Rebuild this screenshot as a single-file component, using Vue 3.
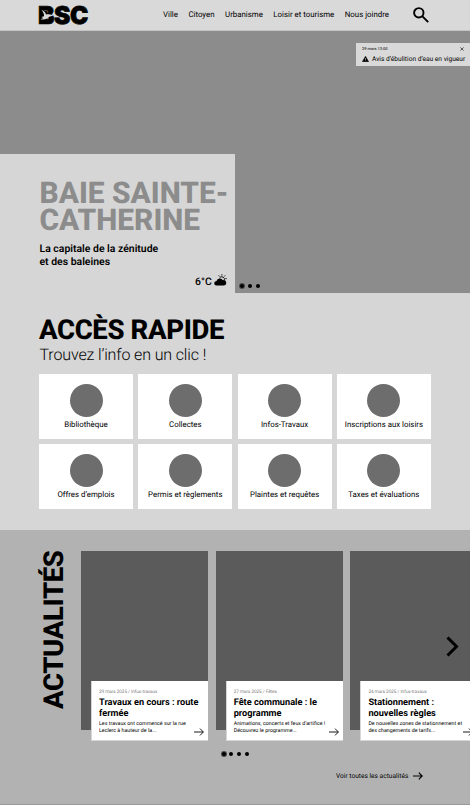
<script setup>
const nav = ['Ville', 'Citoyen', 'Urbanisme', 'Loisir et tourisme', 'Nous joindre']
const services = [
  'Bibliothèque', 'Collectes', 'Infos-Travaux', 'Inscriptions aux loisirs',
  'Offres d’emplois', 'Permis et règlements', 'Plaintes et requêtes', 'Taxes et évaluations',
]
const news = [
  { meta: '29 mars 2025 / Infos-travaux', title: ['Travaux en cours : route', 'fermée'], text: ['Les travaux ont commencé sur la rue', 'Leclerc à hauteur de la...'] },
  { meta: '27 mars 2025 / Fêtes', title: ['Fête communale : le', 'programme'], text: ['Animations, concerts et feux d’artifice !', 'Découvrez le programme...'] },
  { meta: '24 mars 2025 / Infos-travaux', title: ['Stationnement :', 'nouvelles règles'], text: ['De nouvelles zones de stationnement et', 'des changements de tarifs...'] },
]
</script>

<template>
  <div class="page">
    <header class="header">
      <div class="logo">
        <span>BSC</span>
        <svg class="bird" viewBox="0 0 16 20"><path class="fill" d="M4.5 4.5 H9.5 V15 H4.5Z" /><path d="M3.6 4 C6 4.6 7.6 6.4 8 8.6 C10 7.9 12 8.6 15.6 9.4 L11.2 10.8 C9.6 12.9 6.5 14 2.6 13.2 L5.3 11.9 L3.4 10.9 L6 10.2 C6.2 8 5.2 5.8 3.6 4Z" /></svg>
      </div>
      <nav class="nav"><a v-for="n in nav" :key="n">{{ n }}</a></nav>
      <svg class="search" viewBox="0 0 16 16"><circle cx="5.8" cy="5.8" r="4.7" /><path d="M9.2 9.2 L15.2 15.2" /></svg>
    </header>

    <section class="hero">
      <aside class="alert">
        <div class="alert-top"><span>29 mars 13:00</span><svg viewBox="0 0 4 4"><path d="M.4 .4 L3.6 3.6 M3.6 .4 L.4 3.6" /></svg></div>
        <div class="alert-text">
          <svg viewBox="0 0 8 7"><path d="M4 .3 L7.6 6.6 H.4Z" /><path class="mark" d="M4 2.4 V4.5 M4 5.1 V5.8" /></svg>
          <span>Avis d’ébulition d’eau en vigueur</span>
        </div>
      </aside>
      <div class="intro">
        <h1>BAIE SAINTE-<br>CATHERINE</h1>
        <p>La capitale de la zénitude<br>et des baleines</p>
        <div class="weather">
          <span>6°C</span>
          <svg viewBox="0 0 13 12">
            <path class="ray" d="M7.9 .2 V1.6 M4.7 1.4 L5.6 2.5 M11.2 1.4 L10.3 2.5 M12.7 4.6 H11.3 M11.3 7.8 L10.7 7" />
            <path class="sun" d="M5.5 4 A2.7 2.7 0 0 1 10.3 6.4" />
            <path d="M2.6 11.6 A2.3 2.3 0 0 1 2.5 6.9 A3.5 3.5 0 0 1 8.9 6.2 A2.7 2.7 0 0 1 10 11.6Z" />
          </svg>
        </div>
      </div>
      <div class="dots hero-dots"><i class="on" /><i /><i /></div>
    </section>

    <section class="quick">
      <h2>ACCÈS RAPIDE</h2>
      <p class="sub">Trouvez l’info en un clic !</p>
      <div class="grid">
        <a v-for="s in services" :key="s" class="tile"><i /><span>{{ s }}</span></a>
      </div>
    </section>

    <section class="news">
      <div class="news-row">
        <h2 class="vertical">ACTUALITÉS</h2>
        <div class="track">
          <article v-for="n in news" :key="n.meta" class="card">
            <div class="photo" />
            <div class="body">
              <div class="meta">{{ n.meta }}</div>
              <h3>{{ n.title[0] }}<br>{{ n.title[1] }}</h3>
              <p>{{ n.text[0] }}<br>{{ n.text[1] }}</p>
              <svg class="arrow" viewBox="0 0 10 8"><path d="M0 4 H9.2 M6 .6 L9.4 4 L6 7.4" /></svg>
            </div>
          </article>
        </div>
        <svg class="next" viewBox="0 0 13 21"><path d="M1.5 1.5 L10.5 10.5 L1.5 19.5" /></svg>
      </div>
      <div class="dots news-dots"><i class="on" /><i /><i /><i /></div>
      <a class="all"><span>Voir toutes les actualités</span><svg viewBox="0 0 10 8"><path d="M0 4 H9.2 M5.8 .6 L9.2 4 L5.8 7.4" /></svg></a>
    </section>
  </div>
</template>

<style>
body { margin: 0; }
</style>

<style scoped>
* { box-sizing: border-box; }
h1, h2, h3, p { margin: 0; }
svg { display: block; flex: none; }
.page { width: 470px; height: 805px; overflow: hidden; background: #d6d6d6; color: #000; font-family: Roboto, sans-serif; white-space: nowrap; text-rendering: geometricPrecision; }
.header { height: 31px; background: #d9d9d9; display: flex; align-items: center; padding-left: 39px; border-bottom: 1px solid #c4c4c4; }
.logo { position: relative; width: 51px; font: 900 24.5px/29px Inter, sans-serif; letter-spacing: -.3px; margin-left: -1px; -webkit-text-stroke: .7px #000; }
.bird { position: absolute; left: 0; top: 5px; width: 16px; height: 20px; fill: #d9d9d9; }
.bird .fill { fill: #000; }
.nav { display: flex; gap: 10.5px; margin-left: 74px; font-size: 7.87px; line-height: 10px; }
.search { width: 16px; height: 16px; margin: -1px 0 0 23.5px; fill: none; stroke: #000; stroke-width: 1.9; }

.hero { position: relative; height: 262px; background: #8c8c8c; display: flex; align-items: flex-end; }
.alert { position: absolute; right: 0; top: 12px; width: 114px; height: 23px; background: #d9d9d9; padding: 4px 6px 0 6px; }
.alert-top { display: flex; justify-content: space-between; align-items: center; font-size: 4px; line-height: 4px; }
.alert-top svg { width: 4px; height: 4px; stroke: #000; stroke-width: .6; }
.alert-text { display: flex; align-items: center; gap: 3px; margin-top: 3.5px; font-size: 6.6px; line-height: 9px; }
.alert-text svg { width: 7px; height: 6px; stroke: #000; stroke-width: .6; stroke-linejoin: round; }
.alert-text .mark { stroke: #d9d9d9; stroke-width: .7; }
.intro { width: 235px; height: 139px; background: #d6d6d6; padding: 26px 0 0 39.5px; }
h1 { font-size: 29.9px; line-height: 27px; font-weight: 800; color: #8c8c8c; }
.intro p { font-size: 10.45px; line-height: 13px; font-weight: 600; margin-top: 8px; }
.weather { display: flex; align-items: center; gap: 3px; margin: 6px 0 0 155.5px; font-size: 10.4px; line-height: 16px; font-weight: 500; }
.weather svg { width: 13px; height: 12px; margin: -4px 0 0 -1px; }
.ray, .sun { fill: none; stroke: #000; stroke-width: .9; }
.dots { display: flex; align-items: center; gap: 4px; }
.dots i { width: 4px; height: 4px; border-radius: 50%; background: #000; }
.dots .on { box-shadow: 0 0 0 1px #4b4b4b; }
.hero-dots { margin: 0 0 5px 4.5px; }

.quick { height: 237px; padding: 22px 39px 0; }
h2 { font-size: 27.5px; line-height: 30px; font-weight: 800; letter-spacing: -.35px; }
.sub { font-size: 16px; line-height: 20px; font-weight: 300; padding-left: .5px; letter-spacing: -.13px; }
.grid { display: grid; grid-template-columns: repeat(4, 94px); grid-auto-rows: 65px; gap: 5px 5.3px; margin-top: 9px; }
.tile { background: #fff; display: flex; flex-direction: column; align-items: center; padding-top: 10px; font-size: 7.85px; line-height: 10px; }
.tile i { width: 33px; height: 33px; border-radius: 50%; background: #6d6d6d; margin-bottom: 2.6px; }

.news { height: 275px; background: #b2b2b2; padding-top: 21px; border-bottom: 1px solid #999; }
.news-row { position: relative; display: flex; height: 190px; padding-left: 39px; }
.vertical { writing-mode: vertical-rl; transform: rotate(180deg); width: 30px; height: 158px; line-height: 30px; margin-right: 12px; }
.track { display: flex; gap: 7.7px; }
.card { width: 127px; flex: none; }
.photo { height: 179px; background: #5b5b5b; }
.body { position: relative; width: 117px; height: 60px; margin: -49px 0 0 10px; background: #fff; border-left: 1px solid #d6d6d6; border-bottom: 1px solid #d6d6d6; padding: 9px 0 0 7px; }
.meta { font-size: 4.6px; line-height: 5px; color: #333; font-weight: 300; }
h3 { font-size: 9.2px; line-height: 11px; font-weight: 700; margin-top: 2px; }
.body p { font-size: 5.3px; line-height: 6.5px; margin-top: 2px; }
.arrow { position: absolute; right: 4px; bottom: 4px; width: 10px; height: 8px; fill: none; stroke: #000; stroke-width: .9; }
.next { position: absolute; left: 446px; top: 84.5px; width: 13px; height: 21px; fill: none; stroke: #000; stroke-width: 3; }
.news-dots { margin: 10.5px 0 0 221.5px; gap: 3.7px; }
.all { display: flex; align-items: center; gap: 4.5px; margin: 15px 0 0 336px; font-size: 6.6px; line-height: 10px; }
.all svg { width: 10px; height: 8px; fill: none; stroke: #000; stroke-width: 1.2; }
</style>
